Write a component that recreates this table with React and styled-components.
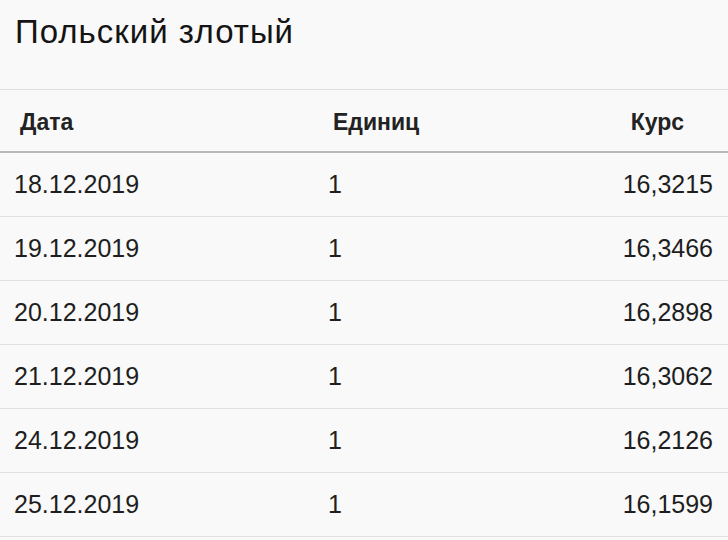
import React from 'react';
import styled, { createGlobalStyle } from 'styled-components';

const GlobalStyle = createGlobalStyle`
  body {
    margin: 0;
    background: #f9f9f9;
    font-family: "Liberation Sans", Arial, sans-serif;
    color: #1a1a1a;
  }
`;

const Wrap = styled.div`
  width: 728px;
  height: 540px;
  overflow: hidden;
  background: #f9f9f9;
`;

const Title = styled.h1`
  margin: 0;
  height: 90px;
  box-sizing: border-box;
  padding: 14px 0 0 15px;
  font-size: 33px;
  font-weight: normal;
  letter-spacing: 1px;
  line-height: 36px;
  color: #141414;
  border-bottom: 1px solid #dedede;
`;

const Row = styled.div`
  display: grid;
  grid-template-columns: 314px 1fr 1fr;
  align-items: center;
  box-sizing: border-box;
  height: ${p => (p.head ? '63px' : '64px')};
  padding: ${p => (p.head ? '3px 15px 0 14px' : '0 15px 0 14px')};
  border-bottom: ${p => (p.head ? '2px solid #b9b9b9' : '1px solid #e0e0e0')};
`;

const Th = styled.div`
  font-size: 23px;
  font-weight: bold;
  color: #222;
  padding-left: ${p => p.pl || 0}px;
  padding-right: ${p => p.pr || 0}px;
  text-align: ${p => p.align || 'left'};
`;

const Td = styled.div`
  font-size: 25px;
  color: #1e1e1e;
  text-align: ${p => p.align || 'left'};
`;

const rows = [
  ['18.12.2019', '1', '16,3215'],
  ['19.12.2019', '1', '16,3466'],
  ['20.12.2019', '1', '16,2898'],
  ['21.12.2019', '1', '16,3062'],
  ['24.12.2019', '1', '16,2126'],
  ['25.12.2019', '1', '16,1599'],
];

const App = () => (
  <Wrap>
    <GlobalStyle />
    <Title>Польский злотый</Title>
    <Row head>
      <Th pl={6}>Дата</Th>
      <Th pl={5}>Единиц</Th>
      <Th align="right" pr={29}>Курс</Th>
    </Row>
    {rows.map(r => (
      <Row key={r[0]}>
        <Td>{r[0]}</Td>
        <Td>{r[1]}</Td>
        <Td align="right">{r[2]}</Td>
      </Row>
    ))}
  </Wrap>
);

export default App;
